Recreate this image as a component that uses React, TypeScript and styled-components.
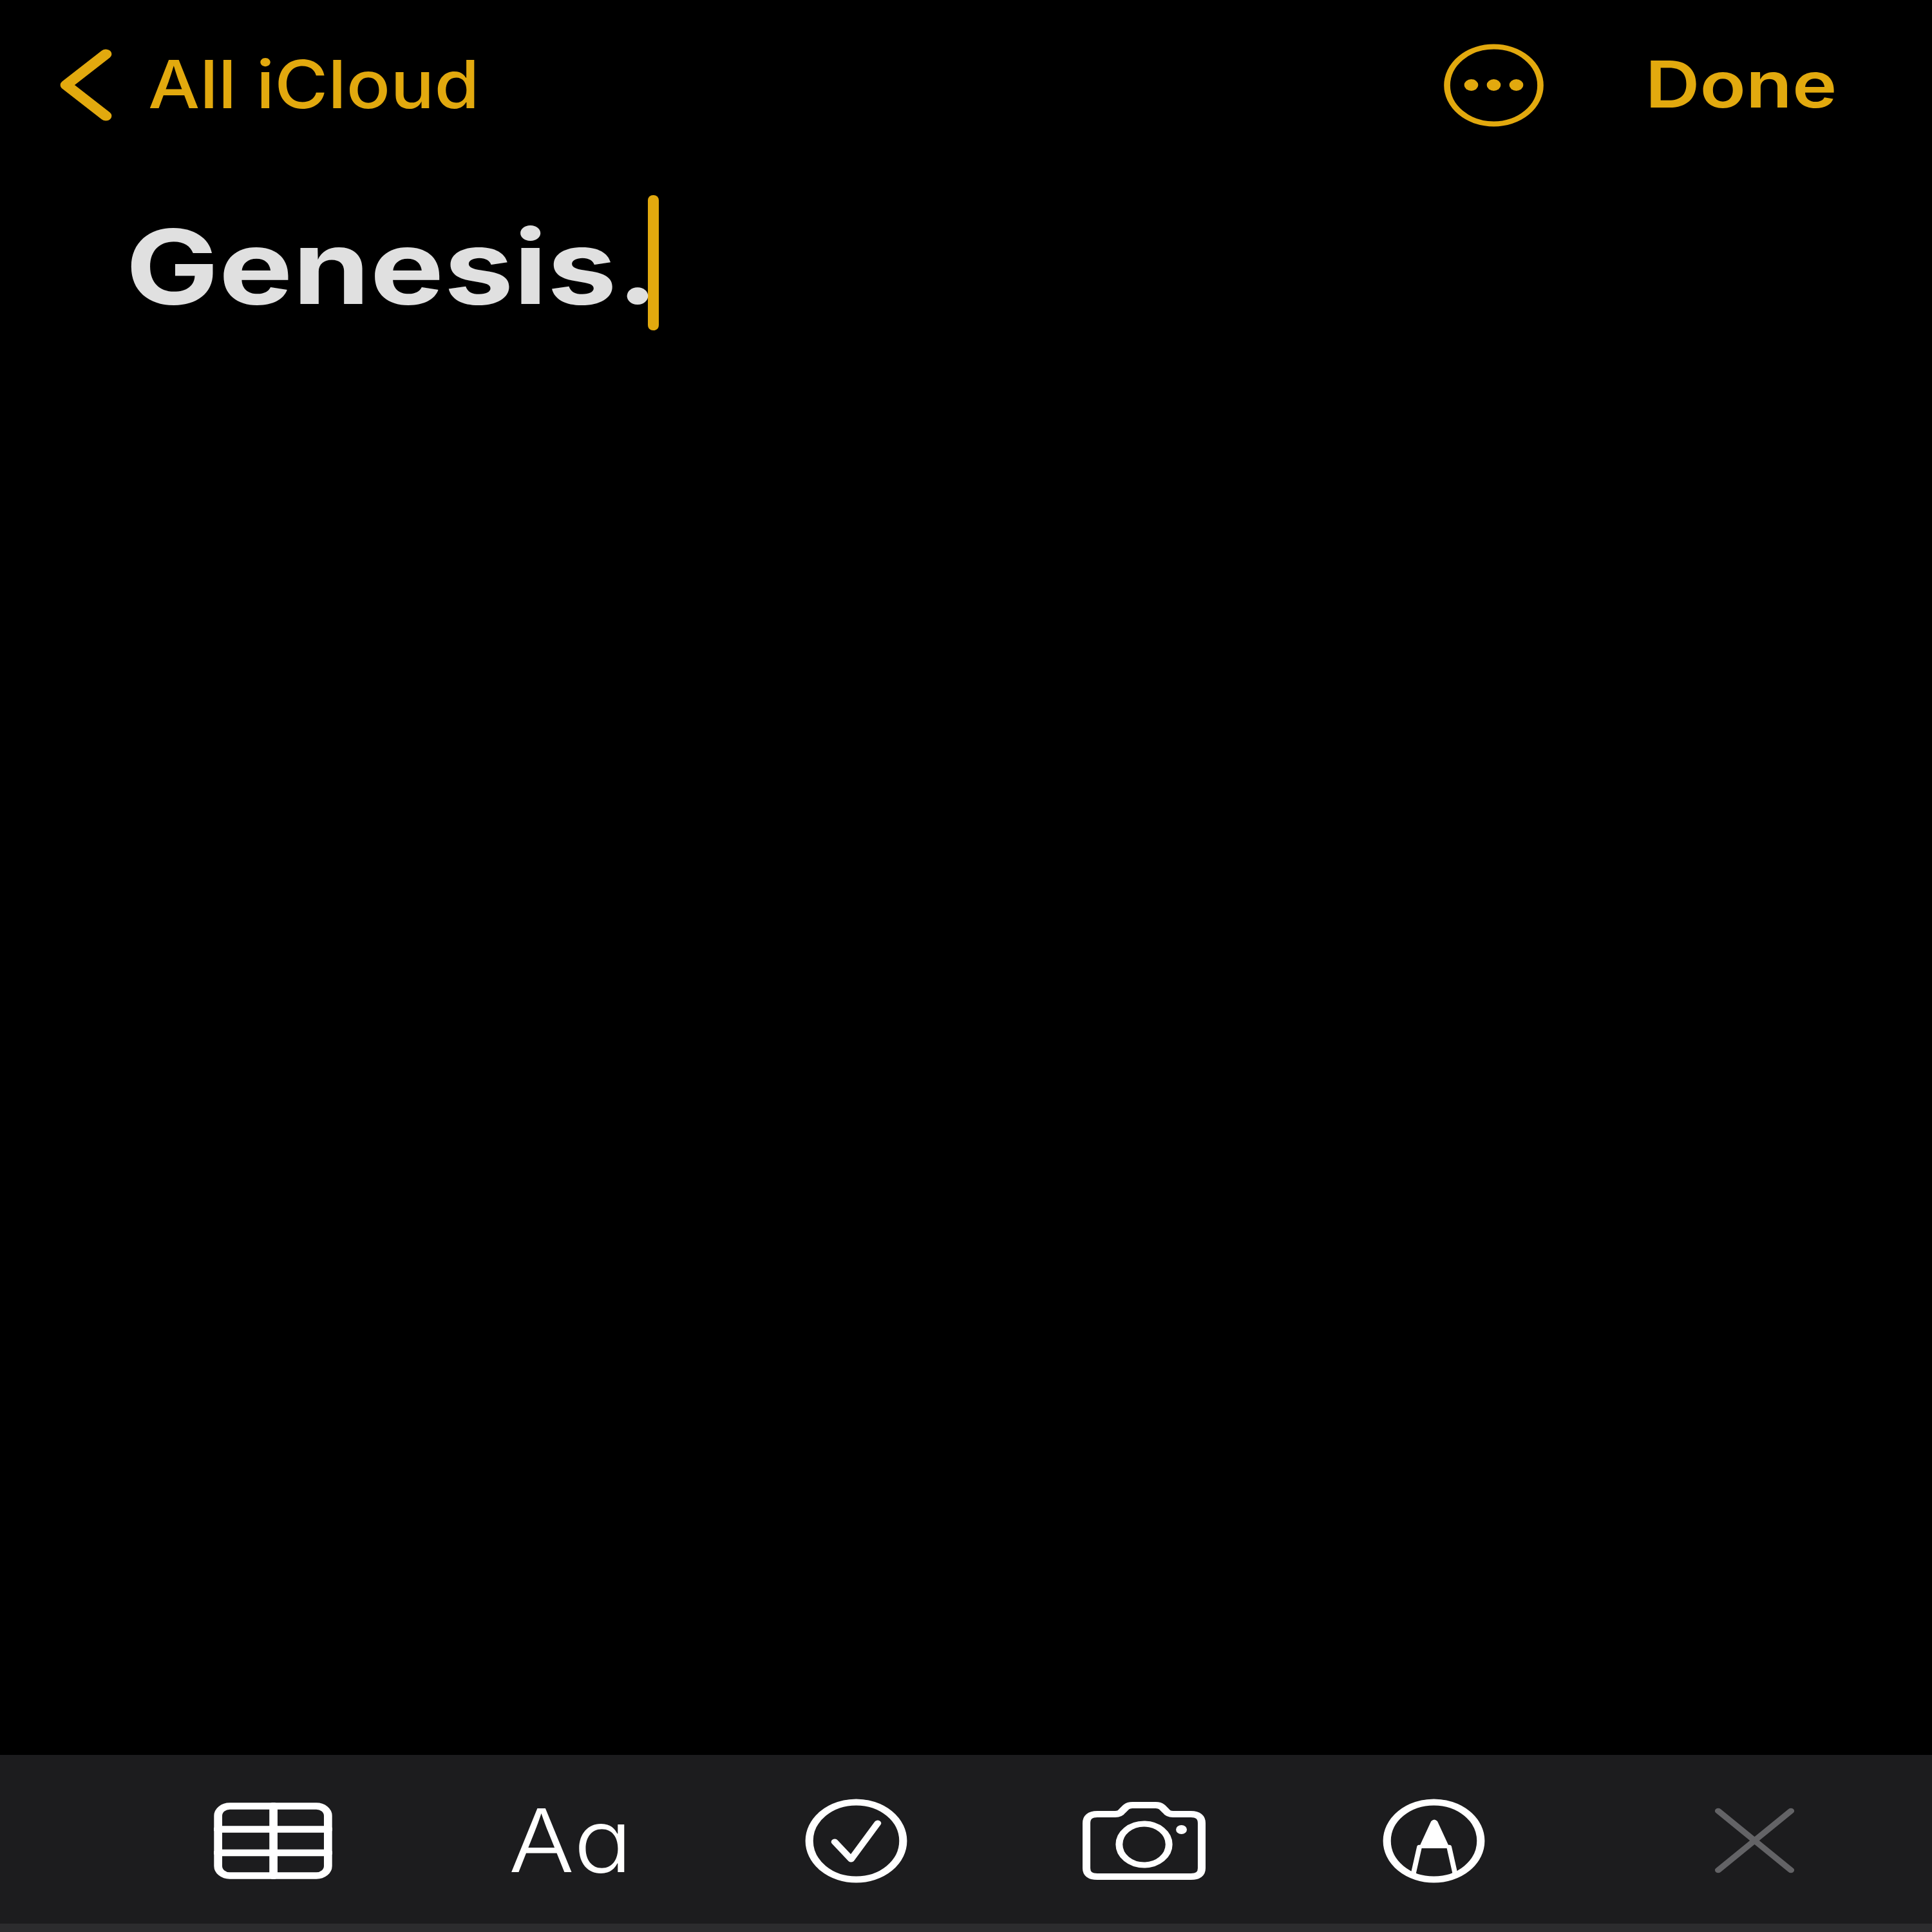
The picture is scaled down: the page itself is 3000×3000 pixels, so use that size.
import * as React from 'react'
import styled, { createGlobalStyle } from 'styled-components';

const GOLD = '#e2a90e';

const GlobalStyle = createGlobalStyle`
    html, body {
        margin: 0;
        background: #000;
    }
`

const Screen = styled.div`
    display: flex;
    flex-direction: column;
    width: 3000px;
    height: 3000px;
    overflow: hidden;
    background: #000;
    font-family: Inter, 'Liberation Sans', sans-serif;
`

const NavBar = styled.div`
    display: flex;
    justify-content: space-between;
    align-items: flex-start;
    padding: 68px 148px 0 93px;
`

const NavGroup = styled.div<{ $gap: number }>`
    display: flex;
    align-items: center;
    gap: ${props => props.$gap}px;
`

const BackLabel = styled.span`
    font-size: 103px;
    font-weight: 500;
    line-height: 130px;
    margin-top: -2px;
    color: ${GOLD};
    white-space: nowrap;
    transform: scaleX(1.1);
    transform-origin: left center;
`

const DoneLabel = styled.span`
    font-size: 100px;
    font-weight: 600;
    line-height: 129px;
    margin-top: -4px;
    color: ${GOLD};
    white-space: nowrap;
    transform: scaleX(1.175);
    transform-origin: right center;
`

const NoteBody = styled.div`
    flex: 1;
    padding: 106px 0 0 195px;
`

const TitleLine = styled.div`
    display: flex;
    align-items: flex-start;
`

const Title = styled.span`
    font-size: 160px;
    font-weight: 700;
    line-height: 210px;
    margin-top: 6px;
    color: #e0e0e0;
    white-space: nowrap;
    transform: scaleX(1.205);
    transform-origin: left center;
`

const Caret = styled.span`
    width: 17px;
    height: 210px;
    margin-left: 125px;
    border-radius: 8px;
    background: ${GOLD};
`

const Toolbar = styled.div`
    display: flex;
    align-items: center;
    gap: 272px;
    height: 262px;
    padding: 4px 0 0 332px;
    box-sizing: border-box;
    background: #1c1c1e;
`

const HomeStrip = styled.div`
    height: 13px;
    background: #2c2c2e;
`

const AaLabel = styled.span`
    display: block;
    width: 160px;
    margin: 0 23px 0 2px;
    font-size: 136px;
    font-weight: 300;
    font-feature-settings: 'cv11';
    line-height: 110px;
    color: #fff;
    transform: scaleX(1.11);
    transform-origin: left center;
`

// the source picture is stretched sideways, so the icons are drawn in a
// narrower viewBox and squeezed out to their real width
const Icon = styled.svg.attrs({ preserveAspectRatio: 'none' })<{ $w: number, $h: number, $push?: number }>`
    display: block;
    flex: none;
    width: ${props => props.$w}px;
    height: ${props => props.$h}px;
    margin-left: ${props => props.$push || 0}px;
    fill: none;
    stroke-linecap: round;
    stroke-linejoin: round;
`

const ChevronIcon = () => (
    <Icon $w={81} $h={112} viewBox="0 0 67 112" stroke={GOLD} strokeWidth={15}>
        <path d="M59 8 L8 56 L59 104" />
    </Icon>
)

const MoreIcon = () => (
    <Icon $w={157} $h={129} viewBox="0 0 130 129" stroke={GOLD} strokeWidth={8}>
        <ellipse cx={65} cy={64.5} rx={60} ry={60} />
        <g fill={GOLD} stroke="none">
            <circle cx={36} cy={64} r={9} />
            <circle cx={65} cy={64} r={9} />
            <circle cx={94} cy={64} r={9} />
        </g>
    </Icon>
)

const TableIcon = () => (
    <Icon $w={184} $h={119} viewBox="0 0 152 119" stroke="#fff" strokeWidth={10.5}>
        <rect x={5.5} y={5.5} width={141} height={108} rx={15} />
        <path d="M5 41.5 H147 M5 78 H147 M76.5 5 V114" />
    </Icon>
)

const CheckIcon = () => (
    <Icon $w={159} $h={131} $push={5} viewBox="0 0 131 131" stroke="#fff" strokeWidth={10}>
        <circle cx={65.5} cy={65.5} r={60} />
        <path d="M38 67 L59 94 L93 38" strokeWidth={9} />
    </Icon>
)

const CameraIcon = () => (
    <Icon $w={191} $h={122} viewBox="0 0 158 122" stroke="#fff" strokeWidth={10}>
        <path d="M21 20 H42 Q48 20 51 15 L56 9 Q59 6 64 6 H94 Q99 6 102 9 L107 15 Q110 20 116 20 H139 Q153 20 153 34 V104 Q153 117 139 117 H19 Q5 117 5 104 V34 Q5 20 19 20 Z" />
        <circle cx={79} cy={67} r={32} strokeWidth={9} />
        <circle cx={127} cy={44} r={7} fill="#fff" stroke="none" />
    </Icon>
)

const MarkupIcon = () => (
    <Icon $w={159} $h={131} $push={3} viewBox="0 0 131 131" stroke="#fff" strokeWidth={10}>
        <circle cx={65.5} cy={65.5} r={60} />
        <path d="M62 35 Q66 30 70 35 L86 77 H46 Z" fill="#fff" stroke="none" />
        <path d="M47 75 L39 118 M85 75 L93 118" strokeWidth={6.5} />
    </Icon>
)

const CloseIcon = () => (
    <Icon $w={125} $h={102} $push={84} viewBox="0 0 103 102" stroke="#636366" strokeWidth={8.5}>
        <path d="M5 5 L98 97 M98 5 L5 97" />
    </Icon>
)

export default function App() {
    return (<Screen>
        <GlobalStyle />
        <NavBar>
            <NavGroup $gap={56}>
                <ChevronIcon />
                <BackLabel>All iCloud</BackLabel>
            </NavGroup>
            <NavGroup $gap={201}>
                <MoreIcon />
                <DoneLabel>Done</DoneLabel>
            </NavGroup>
        </NavBar>
        <NoteBody>
            <TitleLine>
                <Title>Genesis.</Title>
                <Caret />
            </TitleLine>
        </NoteBody>
        <Toolbar>
            <TableIcon />
            <AaLabel>Aa</AaLabel>
            <CheckIcon />
            <CameraIcon />
            <MarkupIcon />
            <CloseIcon />
        </Toolbar>
        <HomeStrip />
    </Screen>)
}
